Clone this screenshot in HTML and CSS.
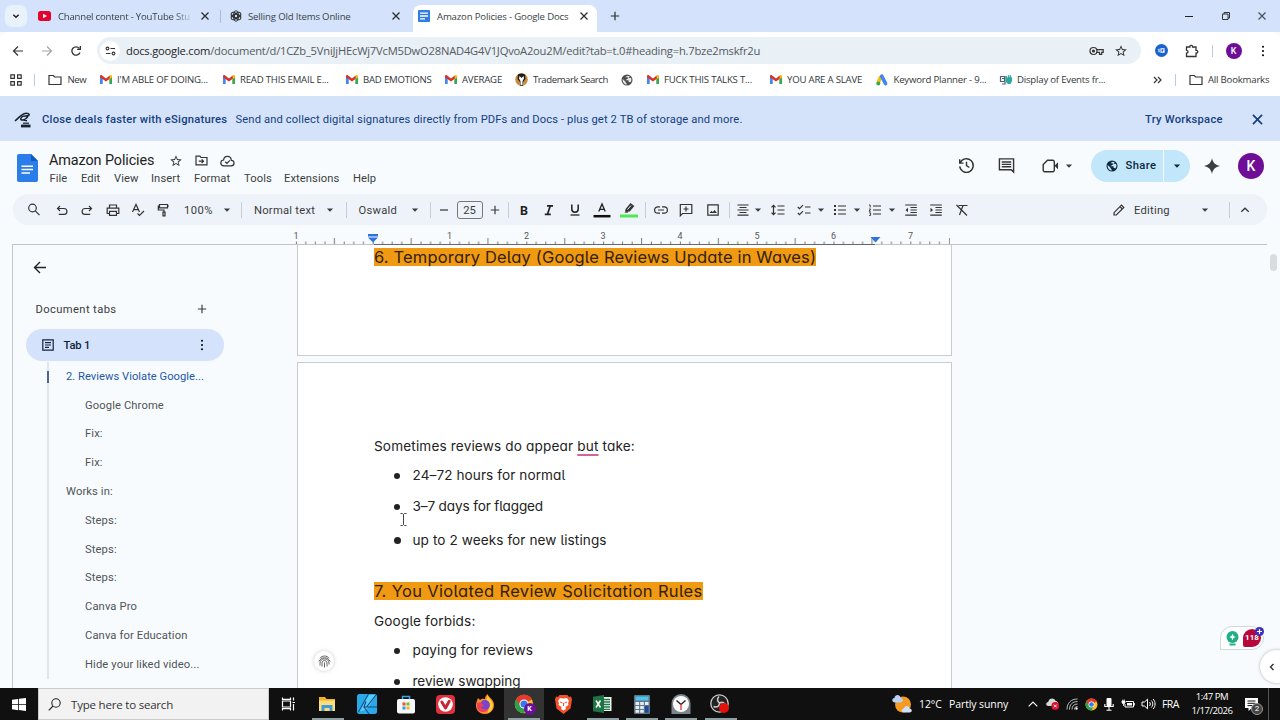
FILE: index.html
```html
<!DOCTYPE html>
<html lang="en">
<head>
<meta charset="utf-8">
<title>Amazon Policies - Google Docs</title>
<link rel="stylesheet" href="styles.css">
</head>
<body>
<svg class="defs" width="0" height="0">
  <symbol id="x" viewBox="0 0 10 10"><path d="M1.500 1.500l7 7M8.500 1.500l-7 7" fill="none" stroke="currentColor" stroke-width="1.300"/></symbol>
  <symbol id="plus" viewBox="0 0 16 16"><path d="M8 3.800v8.400M3.800 8h8.400" fill="none" stroke="currentColor" stroke-width="1.200"/></symbol>
  <symbol id="caret" viewBox="0 0 8 8"><path d="M.9 2.500h6.200L4 5.700z" fill="currentColor"/></symbol>
  <symbol id="gmail" viewBox="0 0 12 9"><path d="M0 1.500V9h2.700V3.500z" fill="#4285f4"/><path d="M12 1.500V9H9.300V3.500z" fill="#34a853"/><path d="M9.300 1v3.500L12 2.500V1.300C12 .1 10.700-.3 9.900.4z" fill="#fbbc04"/><path d="M0 1.300C0 .1 1.300-.3 2.100.4L6 3.400 9.700.5v3.200L6 6.600 0 2.300z" fill="#d93025"/></symbol>
  <symbol id="folder" viewBox="0 0 14 12"><path d="M1 10.500v-9h4.300l1.400 1.500H13v7.500z" fill="none" stroke="currentColor" stroke-width="1.200"/></symbol>
  <symbol id="star" viewBox="0 0 24 24"><path d="M22 9.240l-7.190-.62L12 2 9.190 8.630 2 9.240l5.460 4.730L5.820 21 12 17.270 18.180 21l-1.630-7.030L22 9.240zM12 15.400l-3.760 2.270 1-4.280-3.320-2.880 4.380-.38L12 6.100l1.710 4.040 4.380.38-3.320 2.880 1 4.280L12 15.400z" fill="currentColor"/></symbol>
  <symbol id="dots" viewBox="0 0 4 14"><circle cx="2" cy="2" r="1.200"/><circle cx="2" cy="7" r="1.200"/><circle cx="2" cy="12" r="1.200"/></symbol>
  <symbol id="globe" viewBox="0 0 24 24"><circle cx="12" cy="12" r="11" fill="currentColor"/><path d="M3.500 10l6 6v1.500l2 1.500v2.200C6 20.500 2.500 16 3.500 10zM9.500 7V5.500l3-1.500V3.300L17 4.500 16.500 7 14 8v1.500h-2V11H9.500v1.500h5.500v3l2 .3 1.500 1.200C21 15 21.500 10 20 8l-2-.5-3 1L12 6z" fill="var(--land)"/></symbol>
  <symbol id="chrome" viewBox="0 0 24 24"><circle cx="12" cy="12" r="11" fill="#fbc116"/><path d="M12 12L2.470 6.500A11 11 0 0 1 21.530 6.500z" fill="#e33b2e"/><path d="M2.470 6.500A11 11 0 0 0 12 23l4.700-8.300L12 12z" fill="#2ba24c"/><path d="M12 7h9.800a11 11 0 0 0-.3-.5A11 11 0 0 0 2.470 6.500L7.500 14z" fill="#e33b2e"/><circle cx="12" cy="12" r="5.500" fill="#fff"/><circle cx="12" cy="12" r="4.300" fill="#3b78e7"/></symbol>
</svg>

<header class="tabstrip">
  <span class="tabsearch"><svg width="8" height="8" viewBox="0 0 8 8"><path d="M1.300 2.700L4 5.300l2.700-2.600" fill="none" stroke="#1f1f1f" stroke-width="1.500"/></svg></span>
  <svg width="13" height="10" viewBox="0 0 13 10"><rect width="13" height="10" rx="2.500" fill="#e6002d"/><path d="M5 2.700v4.600L9 5z" fill="#fff"/></svg>
  <span class="tabtitle fade">Channel content - YouTube Stu</span>
  <svg class="ic10"><use href="#x"/></svg>
  <i class="tabsep"></i>
  <svg width="12" height="12" viewBox="0 0 12 12" fill="none" stroke="#333" stroke-width="1"><ellipse cx="6" cy="4.300" rx="2.400" ry="3.600"/><ellipse cx="6" cy="4.300" rx="2.400" ry="3.600" transform="rotate(60 6 6)"/><ellipse cx="6" cy="4.300" rx="2.400" ry="3.600" transform="rotate(120 6 6)"/><ellipse cx="6" cy="4.300" rx="2.400" ry="3.600" transform="rotate(180 6 6)"/><ellipse cx="6" cy="4.300" rx="2.400" ry="3.600" transform="rotate(240 6 6)"/><ellipse cx="6" cy="4.300" rx="2.400" ry="3.600" transform="rotate(300 6 6)"/></svg>
  <span class="tabtitle">Selling Old Items Online</span>
  <svg class="ic10"><use href="#x"/></svg>
  <div class="activetab">
    <svg width="12" height="12" viewBox="0 0 12 12"><rect width="12" height="12" rx="1" fill="#2f7de1"/><path d="M2 3.200h8M2 6h8M2 8.800h5" stroke="#fff" stroke-width="1.300"/></svg>
    <span class="tabtitle">Amazon Policies - Google Docs</span>
    <svg class="ic10"><use href="#x"/></svg>
  </div>
  <svg class="ic16"><use href="#plus"/></svg>
  <svg width="10" height="10" viewBox="0 0 10 10"><path d="M1 5.500h8" stroke="#222"/></svg>
  <svg width="10" height="10" viewBox="0 0 10 10" fill="none" stroke="#222" stroke-width=".9"><path d="M1.500 3h5.500v5.500H1.500zM3 3V1.500h5.500V7H7"/></svg>
  <svg class="ic10 thin"><use href="#x"/></svg>
</header>

<nav class="addressbar">
  <svg width="12" height="12" viewBox="0 0 12 12" fill="none" stroke="#333" stroke-width="1.200"><path d="M11 6H1.800M6 1.500L1.500 6 6 10.500"/></svg>
  <svg width="12" height="12" viewBox="0 0 12 12" fill="none" stroke="#a3a6aa" stroke-width="1.200"><path d="M1 6h9.200M6 1.500L10.500 6 6 10.500"/></svg>
  <svg width="12" height="12" viewBox="0 0 12 12" fill="none" stroke="#333" stroke-width="1.300"><path d="M10 7.500A4.200 4.200 0 1 1 9.300 3.300M10.400 1v3.300H7.100"/></svg>
  <div class="omnibox">
    <span class="tune"><svg width="11" height="10" viewBox="0 0 11 10" fill="none" stroke="#333" stroke-width="1.100"><circle cx="2.500" cy="2.500" r="1.400"/><path d="M5.500 2.500h4.500M1 7.500h4.500"/><circle cx="8.500" cy="7.500" r="1.400"/></svg></span>
    <span class="url"><b>docs.google.com</b>/document/d/1CZb_5VniJjHEcWj7VcM5DwO28NAD4G4V1JQvoA2ou2M/edit?tab=t.0#heading=h.7bze2mskfr2u</span>
    <svg class="keyicon" width="15" height="10" viewBox="0 0 15 10" fill="none" stroke="#333" stroke-width="1.200"><circle cx="4.500" cy="5" r="3.500"/><circle cx="4.500" cy="5" r="1" fill="#333"/><path d="M7.700 3.700h6.500v2.600h-1.500v2h-2.200v-2H7.700"/></svg>
    <svg width="14" height="14"><use href="#star"/></svg>
  </div>
  <svg width="13" height="13" viewBox="0 0 13 13"><circle cx="6.500" cy="6.500" r="6.500" fill="#1a63cf"/><path d="M4 4.800v3.400M6 4.800h3v3.400H6zM8 7l1.500 1.500" fill="none" stroke="#fff" stroke-width="1.100"/></svg>
  <svg width="14" height="14" viewBox="0 0 14 14" fill="none" stroke="#333" stroke-width="1.300"><path d="M1.500 3h3.300C4.500.800 7.900.800 7.600 3H11v3.300c2.300-.2 2.300 3 0 2.800v3.400H1.500V9.200C3.600 9 3.600 6.500 1.500 6.300z"/></svg>
  <i class="vsep"></i>
  <span class="avatar small">K</span>
  <svg width="4" height="12"><use href="#dots"/></svg>
</nav>

<nav class="bookmarks">
  <svg width="12" height="12" viewBox="0 0 12 12" fill="none" stroke="#333" stroke-width="1.200"><path d="M.8.8h3.600v3.600H.8zM7.600.8h3.600v3.600H7.600zM.8 7.600h3.600v3.600H.8zM7.600 7.600h3.600v3.600H7.600z"/></svg>
  <i class="vsep"></i>
  <svg width="14" height="12"><use href="#folder"/></svg><span class="tight">New</span>
  <svg class="gm"><use href="#gmail"/></svg><span>I'M ABLE OF DOING...</span>
  <svg class="gm"><use href="#gmail"/></svg><span>READ THIS EMAIL E...</span>
  <svg class="gm"><use href="#gmail"/></svg><span>BAD EMOTIONS</span>
  <svg class="gm"><use href="#gmail"/></svg><span>AVERAGE</span>
  <svg width="13" height="13" viewBox="0 0 13 13"><circle cx="6.500" cy="6.500" r="6.300" fill="#c98a3c"/><path d="M3 1.500Q6.500-.5 10 1.500L10.500 6 8 9v3.800H5V9L2.500 6z" fill="#1c1c1c"/><path d="M4.500 3L6.500 5l2-2 .5 2.500L7.500 8v4h-2V8L4 5.500z" fill="#fff"/></svg><span class="tight">Trademark Search</span>
  <svg class="gl" width="12" height="12"><use href="#globe"/></svg>
  <svg class="gm"><use href="#gmail"/></svg><span>FUCK THIS TALKS T...</span>
  <svg class="gm"><use href="#gmail"/></svg><span>YOU ARE A SLAVE</span>
  <svg width="13" height="12" viewBox="0 0 13 12"><path d="M4.800 2.500L2.300 8.500" stroke="#fbbc04" stroke-width="3.600"/><path d="M5.800 2.300l3.700 7.200" stroke="#4285f4" stroke-width="3.800" stroke-linecap="round"/><circle cx="2.300" cy="9.600" r="2" fill="#34a853"/></svg><span>Keyword Planner - 9...</span>
  <svg width="12" height="10" viewBox="0 0 12 10"><path d="M.5 1.500h4v5h-4zM2 3.500h3M5 1v8H2" fill="none" stroke="#4d6670" stroke-width="1.200"/><path d="M6 1h1.200v1.500h.8V.3h1.200v2h.6V.3H11v2h1V6L10.500 9H8L6 7z" fill="#2ba8a0"/></svg><span>Display of Events fr...</span>
  <svg width="9" height="8" viewBox="0 0 9 8" fill="none" stroke="#333" stroke-width="1.200"><path d="M1 1l3 3-3 3M5 1l3 3-3 3"/></svg>
  <i class="vsep"></i>
  <svg width="14" height="12"><use href="#folder"/></svg><span>All Bookmarks</span>
</nav>

<section class="banner">
  <svg width="17" height="16" viewBox="0 0 17 16" fill="none" stroke="#17202e" stroke-width="1.500"><path d="M0 9C3.500 6 6 3 9 1.800c3.500-1.200 6 .2 4.800 1.600C12.500 4.600 9 3.500 7.500 4.500 6 5.500 4.500 8 7.500 8c2.500 0 5-2.500 5.500-4.300M8.500 8l3.500.8"/><path d="M6 14h9.500" stroke-width="2.800"/><path d="M8 11.200h6" stroke-width="1.200"/></svg>
  <span class="med">Close deals faster with eSignatures</span>
  <span class="lead">Send and collect digital signatures directly from PDFs and Docs - plus get 2 TB of storage and more.</span>
  <span class="med">Try Workspace</span>
  <svg width="13" height="13"><use href="#x"/></svg>
</section>

<section class="dochead">
  <svg class="docslogo" width="21" height="28" viewBox="0 0 21 28"><path d="M2 0h12l7 7v19a2 2 0 0 1-2 2H2a2 2 0 0 1-2-2V2a2 2 0 0 1 2-2z" fill="#2b7de9"/><path d="M14 0l7 7h-7z" fill="#1558c0"/><path d="M4.500 12.300h11.500M4.500 15.600h11.500M4.500 18.900h8.500" stroke="#fff" stroke-width="1.500"/></svg>
  <div class="titles">
    <div class="titlerow">
      <span class="doctitle">Amazon Policies</span>
      <svg width="14" height="14"><use href="#star"/></svg>
      <svg width="13" height="11" viewBox="0 0 14 12" fill="none" stroke="#333" stroke-width="1.300"><path d="M1 10.800V1.200h4.200l1.300 1.500H13v8.100zM4 6.700h5M7.200 4.700l2 2-2 2"/></svg>
      <svg width="15" height="12" viewBox="0 0 15 12" fill="none" stroke="#333" stroke-width="1.200"><path d="M4 10.800C-.2 10.800-.2 5.300 3.600 5 4.200.2 11 .2 11.300 5.300c3.800.2 3.500 5.500 0 5.500zM5.200 6.800l1.700 1.600 3-3"/></svg>
    </div>
    <div class="menus"><span>File</span><span>Edit</span><span>View</span><span>Insert</span><span>Format</span><span>Tools</span><span>Extensions</span><span>Help</span></div>
  </div>
  <div class="actions">
    <svg width="17" height="17" viewBox="0 0 18 18" fill="none" stroke="#333" stroke-width="1.500"><path d="M2.300 6.200A7.200 7.200 0 1 1 1.800 10M1.800 2.500v4h4M9 5v4.200l3 1.900"/></svg>
    <svg width="17" height="17" viewBox="0 0 18 18" fill="none" stroke="#333" stroke-width="1.500"><path d="M1.500 2h15v14l-2.500-2.500H1.500zM4 5.300h10M4 7.800h10M4 10.300h10"/></svg>
    <svg width="18" height="14" viewBox="0 0 18 14"><path d="M5.500 1.200h5.300a1.500 1.500 0 0 1 1.500 1.500v8.600a1.500 1.500 0 0 1-1.500 1.500H2.700a1.500 1.500 0 0 1-1.500-1.500V5.500z" fill="none" stroke="#333" stroke-width="1.400"/><path d="M12.500 6.800l3.500-3.500v7z" fill="#333"/></svg>
    <svg class="ic8"><use href="#caret"/></svg>
    <div class="share">
      <span class="sharemain"><svg width="12" height="12"><use href="#globe"/></svg><span class="med">Share</span></span>
      <span class="sharedrop"><svg class="ic8"><use href="#caret"/></svg></span>
    </div>
    <svg width="16" height="16" viewBox="0 0 16 16"><path d="M8 0c.8 4.600 3.400 7.200 8 8-4.600.8-7.200 3.400-8 8-.8-4.600-3.400-7.200-8-8 4.600-.8 7.200-3.400 8-8z" fill="#3c3f41"/></svg>
    <span class="avatar">K</span>
  </div>
</section>

<section class="toolbar">
  <svg class="ic16 s" viewBox="0 0 16 16"><circle cx="6.500" cy="6" r="3.800"/><path d="M9.300 8.800l4.200 4.400"/></svg>
  <svg class="ic16 s" viewBox="0 0 16 16"><path d="M6 4L3.500 6.500 6 9M3.500 6.500H10a2.900 2.900 0 0 1 0 5.800H4.800"/></svg>
  <svg class="ic16 s" viewBox="0 0 16 16"><path d="M10 4l2.500 2.500L10 9M12.500 6.500H6a2.900 2.900 0 0 0 0 5.800h5.200"/></svg>
  <svg class="ic16 s" viewBox="0 0 16 16"><path d="M4.500 6V3h7v3M4.500 11.500h-2.300V6.200h11.600v5.300h-2.300M4.500 9.300h7v4h-7z"/></svg>
  <svg class="ic16 s" viewBox="0 0 16 16"><path d="M2.500 10L6 2.500 9.500 10M3.600 7.700h4.800M7.500 11.500l2 2L14 9"/></svg>
  <svg class="ic16 s" viewBox="0 0 16 16"><path d="M3.500 2.500h8v3.300h-8zM3.500 4H2.300v4H8v2.200M7 10.200h2v3.600H7zM11.500 4H13"/></svg>
  <span class="zoomval">100%</span>
  <svg class="ic8"><use href="#caret"/></svg>
  <i></i>
  <span>Normal text</span>
  <svg class="ic8"><use href="#caret"/></svg>
  <i></i>
  <span>Oswald</span>
  <svg class="ic8"><use href="#caret"/></svg>
  <i></i>
  <svg class="ic16 s" viewBox="0 0 16 16"><path d="M4 8h8"/></svg>
  <span class="sizebox">25</span>
  <svg class="ic16"><use href="#plus"/></svg>
  <i></i>
  <span class="glyph bold">B</span>
  <svg class="ic16" viewBox="0 0 16 16"><path d="M6 3.800h6M3.800 12.300h6M9.300 3.800L6.500 12.300" fill="none" stroke="#222" stroke-width="1.700"/></svg>
  <svg class="ic16" viewBox="0 0 16 16"><path d="M4.800 2.500v4.500c0 4.300 6.400 4.300 6.400 0V2.500" fill="none" stroke="#222" stroke-width="1.500"/><path d="M3.500 13h9" stroke="#222" stroke-width="1.300"/></svg>
  <svg class="ic16 tall" viewBox="0 0 16 18"><path d="M4.800 10.500L8 3l3.200 7.500M5.800 8.300h4.400" fill="none" stroke="#222" stroke-width="1.300"/><path d="M-.5 15.200h17" stroke="#111" stroke-width="2.500"/></svg>
  <svg class="ic16 tall" viewBox="0 0 16 18"><path d="M5 7.500L9.500 2l3.800 3-4.500 5.500H5.500L4 9.500z" fill="#333"/><path d="M6.500 8.500L10 4.500" stroke="#eef2fa" stroke-width="1"/><path d="M3.500 11.500l1.800-2.300 2 1.500-.8 1z" fill="#333"/><path d="M-1 15h18" stroke="#4ee94e" stroke-width="3"/></svg>
  <i></i>
  <svg class="ic16 s" viewBox="0 0 16 16"><path d="M7 4.800H4.800a3.200 3.200 0 0 0 0 6.400H7M9 4.800h2.200a3.200 3.200 0 0 1 0 6.400H9M5 8h6"/></svg>
  <svg class="ic16 s" viewBox="0 0 16 16"><path d="M2.300 2.500h11.500v9H4.500l-2.200 2.300zM8 4.500v5M5.500 7h5"/></svg>
  <svg class="ic16 s" viewBox="0 0 16 16"><path d="M2.800 2.800h10.400v10.400H2.800z"/><path d="M4.500 11l2-2.300 1.300 1.400L9.700 8l2.200 3z" fill="#333" stroke="none"/></svg>
  <i></i>
  <svg class="ic16 s" viewBox="0 0 16 16"><path d="M2.500 3h11M4.500 5.500h7M2.500 8h11M4.500 10.500h7M2.500 13.200h11"/></svg>
  <svg class="ic8"><use href="#caret"/></svg>
  <svg class="ic16 s" viewBox="0 0 16 16"><path d="M7.500 4h7M7.500 8h7M7.500 12h7M3.500 3.500v9M1.500 5.300l2-2 2 2M1.500 10.700l2 2 2-2"/></svg>
  <svg class="ic16 s" viewBox="0 0 16 16"><path d="M9 5h5.500M9 11h5.500M1.800 5l1.700 1.700L7 3.200M1.800 11l1.700 1.700L7 9.200"/></svg>
  <svg class="ic8"><use href="#caret"/></svg>
  <svg class="ic16 s" viewBox="0 0 16 16"><path d="M6 4h8M6 8h8M6 12h8"/><path d="M2 4h2M2 8h2M2 12h2" stroke-width="2.200"/></svg>
  <svg class="ic8"><use href="#caret"/></svg>
  <svg class="ic16 s" viewBox="0 0 16 16"><path d="M6 4h8M6 8h8M6 12h8"/><path d="M2 3h1.200v2.500M2 7h1.700L2 9.200h1.800M2 10.800h1.600v2.600H2" stroke-width=".9"/></svg>
  <svg class="ic8"><use href="#caret"/></svg>
  <svg class="ic16 s" viewBox="0 0 16 16"><path d="M2.200 3h11.600M7.500 5.500h6.300M7.500 8h6.300M7.500 10.500h6.300M2.200 13.200h11.600"/><path d="M5 5.800v4.400L2.500 8z" fill="#333" stroke="none"/></svg>
  <svg class="ic16 s" viewBox="0 0 16 16"><path d="M2.200 3h11.600M7.500 5.500h6.300M7.500 8h6.300M7.500 10.500h6.300M2.200 13.200h11.600"/><path d="M2.500 5.800v4.400L5 8z" fill="#333" stroke="none"/></svg>
  <svg class="ic16 s" viewBox="0 0 16 16"><path d="M4.500 3.500h9M9 3.500L5.500 13M2.500 3l10.500 10.500"/></svg>
  <svg class="ic16 s" viewBox="0 0 16 16"><path d="M3 13v-2.300L10.500 3.200l2.300 2.300L5.300 13zM9 4.700L11.300 7"/></svg>
  <span>Editing</span>
  <svg class="ic8"><use href="#caret"/></svg>
  <i></i>
  <svg class="ic16 s" viewBox="0 0 16 16"><path d="M4.300 9.800L8 6.200l3.700 3.600"/></svg>
</section>

<div class="ruler">
  <svg width="1280" height="20" viewBox="0 0 1280 20">
    <defs><pattern id="ticks" x="372.700" y="0" width="76.800" height="20" patternUnits="userSpaceOnUse"><path d="M.5 16.500v3M9.900 16.500v3M19.500 16.500v3M29.100 16.500v3M38.500 13v7M48.300 16.500v3M57.900 16.500v3M67.500 16.500v3" stroke="#777" stroke-width="1"/></pattern></defs>
    <rect x="295" y="0" width="648" height="20" fill="url(#ticks)"/>
    <path d="M949.500 13v7" stroke="#999"/>
    <path d="M12 19.500h1255" stroke="#bfc3c6"/><path d="M374 19.500h501" stroke="#666"/>
    <g class="nums"><text x="296" y="14">1</text><text x="449.500" y="14">1</text><text x="526.500" y="14">2</text><text x="603" y="14">3</text><text x="680" y="14">4</text><text x="757" y="14">5</text><text x="833.500" y="14">6</text><text x="910.500" y="14">7</text></g>
    <path d="M368 9h10v2.500h-10zM368 12.500h10l-5 5zM870.500 12h10l-5 5.500z" fill="#2f73e0"/>
  </svg>
</div>

<main>
  <aside>
    <svg class="back" width="14" height="13" viewBox="0 0 14 13" fill="none" stroke="#222" stroke-width="1.400"><path d="M13 6.500H1.500M7 1L1.500 6.500 7 12"/></svg>
    <div class="tabshead"><span>Document tabs</span><svg class="ic16"><use href="#plus"/></svg></div>
    <div class="tab1"><svg width="12" height="12" viewBox="0 0 12 12" fill="none" stroke="#15233f" stroke-width="1.200"><path d="M.8.8h10.400v10.400H.8zM3 3.700h6M3 6h6M3 8.300h4"/></svg><span class="med">Tab 1</span><svg width="4" height="12"><use href="#dots"/></svg></div>
    <ul class="outline">
      <li class="h2 cur">2. Reviews Violate Google...</li>
      <li>Google Chrome</li>
      <li>Fix:</li>
      <li>Fix:</li>
      <li class="h2">Works in:</li>
      <li>Steps:</li>
      <li>Steps:</li>
      <li>Steps:</li>
      <li>Canva Pro</li>
      <li>Canva for Education</li>
      <li>Hide your liked video...</li>
    </ul>
  </aside>
  <div class="pages">
    <article class="page first"><h2><mark>6. Temporary Delay (Google Reviews Update in Waves)</mark></h2></article>
    <article class="page second">
      <p>Sometimes reviews do appear <u>but</u> take:</p>
      <ul>
        <li>24–72 hours for normal</li>
        <li class="snug">3–7 days for flagged</li>
        <li class="big">up to 2 weeks for new listings</li>
      </ul>
      <h2 class="rules"><mark>7. You Violated Review Solicitation Rules</mark></h2>
      <p>Google forbids:</p>
      <ul>
        <li>paying for reviews</li>
        <li class="plain">review swapping</li>
      </ul>
      <span class="finger"><svg width="13" height="13" viewBox="0 0 13 13" fill="none" stroke="#555" stroke-width=".9"><path d="M2 3.200C4 .3 9 .3 11 3.200M.8 6.500C3 1.500 10 1.500 12.200 6.500M2 10.500V8c0-5.500 9-5.500 9 0v1.500M4 11.500V8c0-3.200 5-3.200 5 0v3.500M6.500 7.500v5"/></svg></span>
      <svg class="ibeam" width="7" height="13" viewBox="0 0 7 13" fill="none" stroke="#333" stroke-width=".9"><path d="M.5.500h2l1 1 1-1h2M.5 12.500h2l1-1 1 1h2M3.500 1.500v10"/></svg>
    </article>
  </div>
  <div class="gutter">
    <i class="thumb"></i>
    <div class="grammar">
      <svg width="13" height="15" viewBox="0 0 13 15"><circle cx="6.500" cy="6" r="6" fill="#1fae85"/><path d="M6.500 2.800l1 2.200 2.200 1-2.200 1-1 2.200-1-2.200-2.200-1 2.200-1z" fill="#fff"/><path d="M3.500 13.500h6" stroke="#1fae85" stroke-width="2"/></svg>
      <span class="count">118</span>
      <svg class="badge" width="9" height="9" viewBox="0 0 9 9"><circle cx="4.500" cy="4.500" r="4.500" fill="#3f2fc0"/><path d="M4.500 2v5M2 4.500h5" stroke="#fff" stroke-width="1.100"/></svg>
    </div>
    <span class="sidepanel"><svg width="6" height="8" viewBox="0 0 6 8"><path d="M4.500 1L1.500 4l3 3" fill="none" stroke="#333" stroke-width="1.400"/></svg></span>
  </div>
</main>

<footer class="taskbar">
  <span class="start"><svg width="14" height="13" viewBox="0 0 14 13" fill="#fff"><path d="M0 1.800L6.200.9v5.300H0zM7 .8L14 0v6.200H7zM0 7h6.200v5.200L0 11.300zM7 7h7v6l-7-.9z"/></svg></span>
  <div class="search"><svg width="13" height="13" viewBox="0 0 13 13" fill="none" stroke="#222" stroke-width="1.100"><circle cx="8" cy="5" r="4.200"/><path d="M5 8L.8 12.300"/></svg><span>Type here to search</span></div>
  <div class="apps">
    <span><svg width="15" height="14" viewBox="0 0 15 14" fill="none" stroke="#fff" stroke-width="1.200"><path d="M1.500 4h8v6h-8zM1.500.5v1.800h8V.5M1.500 13.500v-1.800h8v1.800M12.500.5v3M12.500 7v6.500M11.500 5.500h2.500"/></svg></span>
    <span class="open"><svg width="18" height="16" viewBox="0 0 18 16"><path d="M1 1h6l1.500 2H17v12H1z" fill="#f0b429"/><path d="M1 4.500h16V15H1z" fill="#fddc7a"/><path d="M3.500 15V9h11v6h-3v-3h-5v3z" fill="#3f9bd8"/></svg></span>
    <span><svg width="20" height="20" viewBox="0 0 20 20"><rect width="20" height="20" rx="2.500" fill="#2ba9e6"/><path d="M11 1L1.500 17.500 9 16l3-4 7-11z" fill="#56ccfa"/><path d="M11.500 0L1.500 18M9 7.500L7 13h13M7 13l5 7M9.500 13L19 1" fill="none" stroke="#0f4a82" stroke-width="1.100"/></svg></span>
    <span><svg width="18" height="19" viewBox="0 0 18 19"><path d="M5.500 5V1.500h7V5" fill="none" stroke="#3ba4e0" stroke-width="1.500"/><rect y="4" width="18" height="14.500" rx="2" fill="#f5f6f7"/><path d="M5.500 7.500h3v3h-3z" fill="#e8502a"/><path d="M9.500 7.500h3v3h-3z" fill="#7ab82c"/><path d="M5.500 11.500h3v3h-3z" fill="#2b9fe6"/><path d="M9.500 11.500h3v3h-3z" fill="#f8b51e"/></svg></span>
    <span><svg width="19" height="19" viewBox="0 0 19 19"><rect width="19" height="19" rx="4" fill="#e1303c"/><circle cx="9.500" cy="9.500" r="7.300" fill="#fff"/><path d="M5.800 7l3.700 6L13.200 6.300" fill="none" stroke="#c72733" stroke-width="3" stroke-linejoin="round" stroke-linecap="round"/></svg></span>
    <span><svg width="20" height="20" viewBox="0 0 20 20"><path d="M3 4l2 2c2-2 4-1 5-1 0-3 2-4 2.500-5 1 3 3.500 4 5.500 7 3 6-1 13-8 13S-.5 14 1.500 8z" fill="#ff8a1e"/><path d="M12.500 1c1 3 4 5 5 8 1.500 5-2 9-5 10 2-4 1-9-3-11 2-1 3-4 3-7z" fill="#ffd43a"/><circle cx="10" cy="11" r="5" fill="#7a45c8"/><path d="M2 9c2-1 4 0 5 1l2 1c-1 2-3 2-3 2 2 4 6 3 8 1-2 6-11 5-12-1z" fill="#ee3f5c"/></svg></span>
    <span class="open on"><svg width="20" height="20"><use href="#chrome"/></svg><b>K</b></span>
    <span><svg width="17" height="19" viewBox="0 0 17 19"><path d="M4.500 0h8l1.500 2 2-.5 1 3-1.500 9L8.500 19 1.500 13.500 0 4.500l1-3 2 .5z" fill="#f4502a"/><path d="M8.500 3.500l3.500-.5 2 3-1 2 .5 2-3 2 .5 2-2.500 1.500L6 14l.5-2-3-2L4 8 3 6l2-3z" fill="#fff"/><path d="M5 7l2.500 1M12 7L9.500 8M8.500 8v3" stroke="#f4502a"/></svg></span>
    <span class="open"><svg width="19" height="18" viewBox="0 0 19 18"><path d="M9 2h9.500v14H9z" fill="#f3f7f4"/><path d="M11 4.500h6M11 7h6M11 9.500h6M11 12h6M11 14.300h6" stroke="#1f7a45" stroke-width="1.300"/><path d="M0 1.800L11 0v18L0 16.200z" fill="#1d7343"/><path d="M3 5.500l4.500 7M7.500 5.500L3 12.500" stroke="#fff" stroke-width="1.500"/></svg></span>
    <span class="open"><svg width="16" height="19" viewBox="0 0 16 19"><rect width="16" height="19" rx="1" fill="#5f7788"/><path d="M1.500 1.500h13v4h-13z" fill="#4fc3ec"/><path d="M1.500 7h3.600v3H1.500zM6.200 7h3.600v3H6.200zM10.900 7h3.600v3h-3.600zM1.500 11h3.600v3H1.500zM6.200 11h3.600v3H6.200zM1.500 15h3.600v2.700H1.500zM6.200 15h3.600v2.700H6.200z" fill="#e7edf1"/><path d="M10.900 11h3.600v6.700h-3.600z" fill="#1b4c9c"/></svg></span>
    <span class="open"><svg width="20" height="20" viewBox="0 0 20 20"><path d="M.5 20V9.500a9.500 9.500 0 0 1 19 0V20z" fill="#7c858b"/><circle cx="10" cy="10" r="8" fill="#fafafa"/><path d="M10 10.500L5.500 6.500M10 10.500l4.500-4" stroke="#222" stroke-width="1.400"/><path d="M10 10v6" stroke="#d33" stroke-width="1.300"/></svg></span>
    <span class="open"><svg width="20" height="20" viewBox="0 0 20 20"><circle cx="9.500" cy="9.500" r="8.700" fill="#222" stroke="#ccc" stroke-width="1.300"/><path d="M9 2.500c-2.500 2.500-1.500 5 .5 6.500 3-1.500 5.500 0 6 3M9.500 9c0 3-2 5-6 3.500" fill="none" stroke="#c8c8c8" stroke-width="1.600"/><circle cx="14" cy="14" r="5" fill="#e3120b"/></svg></span>
  </div>
  <div class="tray">
    <svg width="20" height="19" viewBox="0 0 20 19"><circle cx="11" cy="9.500" r="8" fill="#f59a23"/><path d="M3 7.500C-.5 7.500-.5 3 2.500 3 3-.8 8-.8 8.500 2.800c3 0 3 4.700 0 4.700z" fill="#b9d2f4"/><path d="M12 17.500c-3 0-3-4 0-4 .5-3.300 5-3.300 5.500 0 3 0 3 4 0 4z" fill="#cfe0f8"/></svg>
    <span>12°C</span><span>Partly sunny</span>
    <svg width="10" height="6" viewBox="0 0 10 6"><path d="M.7 5.300L5 1l4.300 4.300" fill="none" stroke="#fff" stroke-width="1.100"/></svg>
    <svg width="13" height="12" viewBox="0 0 13 12"><path d="M2.500 8C-.7 8-.3 4 2.200 4c.8-4.500 6.300-4.500 7.500-1C12.500 3 13 7 11 8z" fill="#d8d8d8"/><circle cx="9.300" cy="8" r="3.900" fill="#d6112b"/><path d="M7.900 6.600l2.800 2.800M10.700 6.600L7.900 9.400" stroke="#fff"/></svg>
    <svg width="12" height="12" viewBox="0 0 12 12" fill="none" stroke="#bbb" stroke-width="1"><path d="M1 11.500C1 5 5 1 11.500 1M3.500 11.500c0-5 3-8 8-8M6 11.500c0-3.500 2-5.500 5.500-5.500M8.500 11.500c0-2 1-3 3-3"/><circle cx="10.500" cy="10.500" r="1" fill="#fff"/></svg>
    <svg width="13" height="13"><use href="#chrome"/></svg>
    <svg width="10" height="13" viewBox="0 0 10 13"><rect x="2.500" width="5" height="8" rx="1" fill="#fff"/><path d="M.8 6v2.500h8.400V6M5 9v3.500M2.500 12.300h5" fill="none" stroke="#fff" stroke-width="1.100"/></svg>
    <svg width="14" height="10" viewBox="0 0 14 10"><path d="M5 2.500h7.500v5.500H4v-3" fill="none" stroke="#fff"/><path d="M6 4h5v2.500H6z" fill="#fff"/><path d="M13.500 4v2.500M1 2h3v2l-1.500 1L1 4zM1.800.5V2M3.300.5V2M2.500 5v2" stroke="#fff" fill="#fff" stroke-width=".8"/></svg>
    <svg width="15" height="12" viewBox="0 0 15 12" fill="none" stroke="#fff" stroke-width="1"><path d="M1 4h2.500L6.500 1.200v9.600L3.500 8H1zM8.500 4c1 1 1 3 0 4M10.300 2.500c2 2 2 5 0 7M12.200 1c2.500 3 2.500 7 0 10"/></svg>
    <span class="lang">FRA</span>
    <div class="clock"><span>1:47 PM</span><span>1/17/2026</span></div>
    <span class="notif"><svg width="13" height="13" viewBox="0 0 13 13"><path d="M0 0h13v10H7l-3.500 3v-3H0z" fill="#fff"/><path d="M2.500 3h8M2.500 5.300h8M2.500 7.600h5" stroke="#111"/></svg><b>2</b></span>
    <i class="peek"></i>
  </div>
</footer>
</body>
</html>
```
FILE: styles.css
```css
* { box-sizing: border-box; }
body { margin: 0; width: 1280px; height: 720px; overflow: hidden; background: #f8fbfd; color: #3a3d40; font-family: Roboto, "Liberation Sans", sans-serif; font-size: 11.200px; --land: #fff; }
svg { display: block; overflow: visible; flex: none; }
i { display: block; flex: none; }
span { white-space: nowrap; }
.defs { position: absolute; }
.med { font-weight: 500; }
.ic16 { width: 16px; height: 16px; }
.ic10 { width: 10px; height: 10px; }
.ic8 { width: 8px; height: 8px; }
.s { fill: none; stroke: #333; stroke-width: 1.200px; }

.tabstrip { height: 32px; background: #d4e3fb; display: grid; grid-template-columns: 33px 20px 142px 20px 10px 18px 143px 21px 195px 577px 36.500px 36.500px 20px; padding-left: 5px; align-items: center; color: #2b2f33; }
.tabsearch { width: 22px; height: 22px; border-radius: 7px; background: #e9f1fd; display: grid; place-items: center; }
.tabtitle { font: 9.600px "Open Sans", sans-serif; letter-spacing: -.17px; color: #3a3f45; }
.fade { width: 140px; overflow: hidden; mask-image: linear-gradient(90deg, #000 83%, transparent 97%); letter-spacing: -.22px; }
.tabsep { width: 1px; height: 13px; background: #a9bcd8; }
.activetab { align-self: end; height: 27px; width: 184px; margin-left: 1px; background: #fff; border-radius: 8px 8px 0 0; display: grid; grid-template-columns: 19px 142px 10px; align-items: center; padding: 0 0 5px 5px; }
.thin { opacity: .8; }

.addressbar { height: 37px; background: #fff; border-radius: 8px 8px 0 0; display: grid; grid-template-columns: 29px 29px 27px 1058px 29.500px 27px 14px 35px 4px; padding-left: 12px; align-items: center; }
.omnibox { width: 1044px; height: 27px; border-radius: 14px; background: #e9f0f6; display: grid; grid-template-columns: 26px 963px 25px 14px; align-items: center; padding-left: 3px; color: #333; }
.tune { width: 20px; height: 20px; border-radius: 50%; background: #fff; display: grid; place-items: center; }
.url { font: 11.200px "Open Sans", sans-serif; letter-spacing: -.21px; color: #555a5f; }
.url b { font-weight: 400; color: #1f2327; }
.vsep { width: 1px; height: 12px; background: #b9cdea; }
.avatar { width: 26px; height: 26px; border-radius: 50%; background: #6f0d97; color: #fff; font-size: 14px; font-weight: 500; display: grid; place-items: center; }
.avatar.small { width: 16px; height: 16px; font-size: 9px; }

.bookmarks { height: 27px; background: #fff; display: grid; grid-template-columns: 24px 14px 19.500px 32.500px 17px 106px 17px 106px 17px 82px 17px 53px 18px 88px 26px 17px 106px 17px 89px 17.500px 106px 17.500px 136px 22px 14px 19px 70px; padding: 0 0 6px 10px; align-items: center; font: 9.600px "Open Sans", sans-serif; letter-spacing: -.2px; color: #33373b; }
.tight { letter-spacing: -.43px; }
.gm { width: 12px; height: 9px; }
.gl { color: #4a4d50; --land: #e8e8e8; }

.banner { height: 45px; background: #d4e3fa; display: grid; grid-template-columns: 27px 193.500px 909.500px 106px 14px; padding: 2px 0 0 15px; align-items: center; color: #153f7f; letter-spacing: .25px; }
.lead { letter-spacing: .125px; }

.dochead { height: 53px; display: grid; grid-template-columns: 32px 909px 1fr; padding-left: 17px; }
.docslogo { margin-top: 13px; }
.titlerow { display: grid; grid-template-columns: 120px 26px 25px 16px; align-items: center; height: 18px; margin-top: 10px; }
.titlerow svg { margin-top: 1px; }
.doctitle { font-size: 14.400px; letter-spacing: -.1px; color: #222; }
.menus { display: grid; grid-template-columns: 31.500px 33px 37px 43px 50px 40px 69px 30px; height: 18px; align-items: center; padding: 1px 0 0 .5px; color: #3c3f42; letter-spacing: .08px; }
.actions { display: grid; grid-template-columns: 40px 44px 23px 26px 113px 34px 26px; align-items: center; height: 49px; }
.share { display: flex; gap: 1px; width: 99px; height: 32px; color: #0c2740; --land: #c2e7fb; }
.sharemain { width: 72px; border-radius: 16px 0 0 16px; background: #c2e7fb; display: grid; grid-template-columns: 19.500px 40px; padding-left: 15px; align-items: center; letter-spacing: .4px; }
.sharedrop { width: 26px; border-radius: 0 16px 16px 0; background: #c2e7fb; display: grid; place-items: center; }

.toolbar { margin: 0 13px; height: 31px; border-radius: 16px; background: #eef2f9; padding: 1px 0 0 13px; letter-spacing: .25px; display: grid; align-items: center; grid-template-columns: 28px 25px 26px 25px 25.500px 28.500px 39px 18px 13px 72px 20px 12.500px 52.500px 19px 6px 20.500px 30.500px 21px 8px 25px 26px 26.500px 27.500px 24px 7.500px 25.500px 26.500px 24.500px 6px 18.500px 16.500px 26px 21px 15px 21px 14px 21px 14.500px 25.500px 25.500px 157.500px 23px 66.500px 28.500px 7.500px 16px; }
.toolbar i { width: 1px; height: 16px; background: #c9cdd3; }
.zoomval { letter-spacing: .45px; }
.sizebox { width: 26px; height: 18px; border: 1px solid #777; border-radius: 3px; display: grid; place-items: center; letter-spacing: 0; }
.glyph { width: 16px; text-align: center; font-size: 12.500px; color: #222; }
.bold { font-weight: 700; }
.tall { height: 18px; }

.ruler { height: 20px; }
.nums text { font: 9px Roboto, sans-serif; fill: #555; text-anchor: middle; }

main { height: 443px; display: grid; grid-template-columns: 285px 655px 1fr; padding-left: 12px; overflow: hidden; }
aside { border-left: 1px solid #c4c8ca; }
.back { margin: 16px 0 0 19.500px; }
.tabshead { display: flex; justify-content: space-between; align-items: center; width: 174.500px; margin: 27px 0 0 22.500px; height: 16px; letter-spacing: .39px; }
.tab1 { width: 198px; height: 32px; margin: 12px 0 0 13px; border-radius: 16px; background: #d4e2fb; display: grid; grid-template-columns: 21.500px 136.500px 4px; padding-left: 16px; align-items: center; color: #0f1f3d; letter-spacing: -.15px; }
.outline { list-style: none; margin: 1px 0 0 34px; padding: 0; border-left: 2px solid #e2e5e8; letter-spacing: .12px; }
.outline li { height: 28.800px; display: flex; align-items: center; padding-left: 36px; color: #505458; white-space: nowrap; }
.outline .h2 { padding-left: 17px; }
.outline .cur { color: #2459a8; position: relative; letter-spacing: .02px; }
.cur::before { content: ""; position: absolute; left: -2px; top: 9px; width: 2px; height: 12px; background: #4a6596; }

.page { background: #fff; border: 1px solid #c9cccd; font: 13.600px Inter, sans-serif; font-feature-settings: "cv11", "cv05"; letter-spacing: .08px; color: #222; padding-left: 76px; }
.page h2 { margin: 0; font-size: 16.500px; font-weight: 400; line-height: 20px; height: 20px; letter-spacing: .16px; }
.page p { margin: 0; letter-spacing: .15px; }
mark { background: #f09a14; color: #33210a; display: inline-block; height: 18px; line-height: 18px; white-space: nowrap; }
.first { height: 111px; border-top: 0; padding-top: 2px; }
.second { height: 340px; margin-top: 6px; padding-top: 73px; position: relative; }
.second u { text-decoration: underline; text-decoration-color: #d0679b; text-underline-offset: 3px; text-decoration-thickness: 1.500px; }
.second p { line-height: 20px; }
.second h2.rules { margin: 21px 0 10px; letter-spacing: .33px; }
.second ul { list-style: none; margin: 8px 0 0; padding: 0 0 0 38.500px; }
.second li { height: 31px; line-height: 22px; position: relative; }
.second li::before { content: ""; position: absolute; left: -19px; top: 9px; width: 6px; height: 6px; border-radius: 50%; background: #222; }
.second .snug { height: 34px; letter-spacing: -.15px; }
.second .plain { letter-spacing: -.05px; }
.second .big::before { width: 7px; height: 7px; top: 8px; }
.finger { position: absolute; left: 16px; top: 288px; width: 20px; height: 20px; border-radius: 50%; background: #fff; box-shadow: 0 0 4px #ccc; display: grid; place-items: center; }
.ibeam { position: absolute; left: 102px; top: 150px; }

.gutter { position: relative; }
.thumb { position: absolute; left: 318px; top: 9px; width: 7px; height: 17px; border-radius: 4px; background: #d9dcde; }
.grammar { position: absolute; left: 268px; top: 381px; width: 44px; height: 24px; border: 1px solid #d5d8da; border-radius: 12px 12px 12px 0; background: #fff; display: grid; grid-template-columns: 17px 18px; align-items: center; padding-left: 5px; }
.count { width: 18px; height: 18px; background: #b5093c; border-radius: 9px 9px 9px 2px; color: #fff; font: bold 8px/18px Roboto, sans-serif; text-align: center; }
.badge { position: absolute; left: 34px; top: 0; }
.sidepanel { position: absolute; left: 308px; top: 405px; width: 33px; height: 33px; border-radius: 50%; background: #fff; box-shadow: 0 0 3px #aaa; display: grid; align-items: center; padding-left: 9px; }

.taskbar { height: 32px; background: #101010; display: grid; grid-template-columns: 38px 230.500px 623.500px 388px; align-items: center; font-family: "Open Sans", sans-serif; color: #fff; }
.start { display: grid; place-items: center; }
.search { height: 32px; width: 231px; background: #f2f2f2; border: 1px solid #ccc; display: grid; grid-template-columns: 23px 150px; align-items: center; padding-left: 9px; color: #333; font-size: 11.500px; letter-spacing: -.2px; }
.apps { display: flex; height: 32px; }
.apps span { width: 39.300px; height: 32px; display: grid; place-items: center; position: relative; }
.open::after { content: ""; position: absolute; left: 4px; bottom: 0; width: 32px; height: 2px; background: #8fa0a5; }
.on { background: #333; }
.on b { position: absolute; right: 8px; bottom: 5px; width: 12px; height: 12px; border-radius: 50%; background: #6a1199; font: bold 7px/12px Roboto, sans-serif; text-align: center; }
.tray { display: grid; height: 32px; align-items: center; grid-template-columns: 27px 30px 79px 17.500px 20px 19px 19px 17px 20px 21.500px 27px 56px 23px 1px; font-size: 10.500px; letter-spacing: -.1px; }
.lang { letter-spacing: -.6px; }
.clock { display: grid; justify-items: center; font-size: 9.600px; line-height: 14px; width: 46px; letter-spacing: -.48px; }
.notif { position: relative; }
.notif b { position: absolute; left: 6px; top: 5px; width: 12px; height: 12px; border-radius: 50%; background: #444; border: 1px solid #999; font: 8px/10px Roboto, sans-serif; text-align: center; }
.peek { width: 1px; height: 32px; background: #555; }
```
